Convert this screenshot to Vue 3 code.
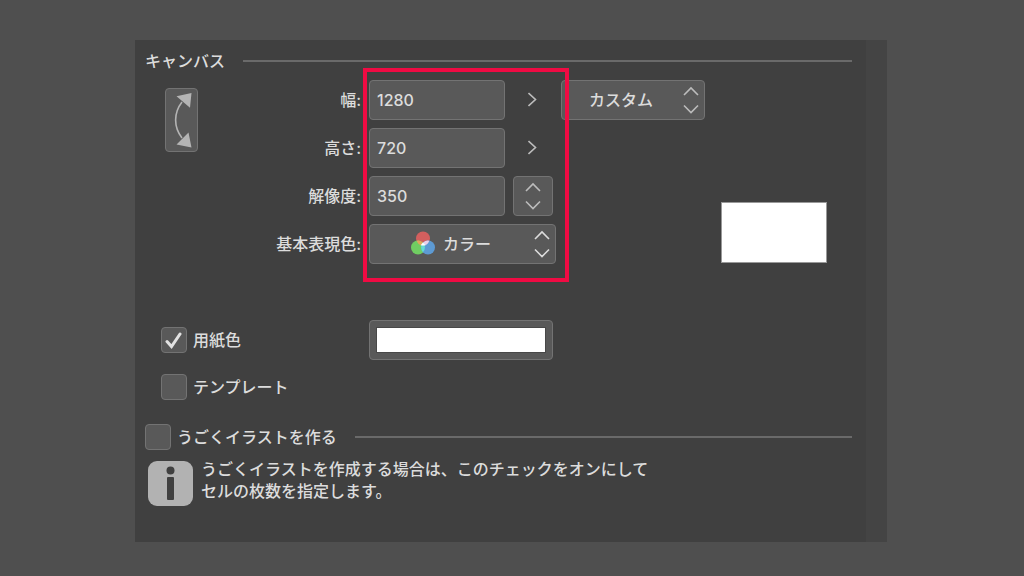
<script setup>
import { ref } from 'vue'

const rows = ref([
  { id: 'width', label: '幅:', value: '1280' },
  { id: 'height', label: '高さ:', value: '720' },
  { id: 'resolution', label: '解像度:', value: '350' },
])
const preset = ref('custom')
const colorMode = ref('color')
const paper = ref(true)
const template = ref(false)
const animation = ref(false)
</script>

<template>
  <main class="page">
    <form class="panel" @submit.prevent>
      <div class="content">
        <div class="heading">
          <h1 class="title">キャンバス</h1>
          <span class="rule"></span>
        </div>

        <section class="canvas">
          <button type="button" class="box swap" aria-label="幅と高さを入れ替え">
            <svg width="31" height="62" viewBox="0 0 31 62" aria-hidden="true">
              <path d="M16 13C7.500 24 7.500 38 16 49" fill="none" stroke="#b4b4b4" stroke-width="1.600" />
              <path d="M25.500 4L10.500 7.200L24 18.800ZM25.500 58.500L10.500 55.500L22.500 43.500Z" fill="#b4b4b4" />
            </svg>
          </button>

          <div class="fields">
            <template v-for="row in rows" :key="row.id">
              <label class="label" :for="row.id">{{ row.label }}</label>
              <div class="row">
                <input :id="row.id" v-model="row.value" class="box number" type="text" inputmode="numeric" />
                <button v-if="row.id === 'resolution'" type="button" class="box step" aria-label="解像度を選択">
                  <svg width="16" height="28" viewBox="0 0 16 28" class="arrows" aria-hidden="true">
                    <path d="M1 9L8 2L15 9M1 19.500L8 26.500L15 19.500" />
                  </svg>
                </button>
                <button v-else type="button" class="more" :aria-label="row.label + ' 詳細'">
                  <svg width="10" height="16" viewBox="0 0 10 16" class="arrows" aria-hidden="true">
                    <path d="M0.500 1L7.500 7.500L0.500 14" />
                  </svg>
                </button>
                <span v-if="row.id === 'width'" class="picker preset">
                  <select v-model="preset" class="box" aria-label="プリセット">
                    <option value="custom">カスタム</option>
                  </select>
                  <svg width="16" height="28" viewBox="0 0 16 28" class="arrows mark" aria-hidden="true">
                    <path d="M1 9L8 2L15 9M1 19.500L8 26.500L15 19.500" />
                  </svg>
                </span>
              </div>
            </template>

            <label class="label" for="mode">基本表現色:</label>
            <div class="row">
              <span class="picker mode">
                <select id="mode" v-model="colorMode" class="box">
                  <option value="color">カラー</option>
                </select>
                <svg width="26" height="24" viewBox="0 0 26 24" class="rgb" aria-hidden="true">
                  <circle cx="13" cy="7.500" r="7" fill="#d25f5e" />
                  <circle cx="8" cy="16.500" r="7" fill="#70cd62" />
                  <circle cx="18" cy="16.500" r="7" fill="#5d9ad3" />
                  <path d="M6.700 9.700A7 7 0 0 1 13 11.700L12.200 14.500A7 7 0 0 1 6.700 9.700Z" fill="#e3a45c" />
                  <path d="M19.300 9.700A7 7 0 0 0 13 11.700L13 14.500A7 7 0 0 0 19.300 9.700Z" fill="#ead0ea" />
                  <path d="M13 11.700A7 7 0 0 1 13 21.300A7 7 0 0 1 13 11.700Z" fill="#65dcd2" />
                  <path d="M13 11.600L15.500 14.200Q13 15 10.600 14.200Z" fill="#fff" />
                </svg>
                <svg width="16" height="28" viewBox="0 0 16 28" class="arrows mark bright" aria-hidden="true">
                  <path d="M1 9L8 2L15 9M1 19.500L8 26.500L15 19.500" />
                </svg>
              </span>
            </div>
            <span class="highlight"></span>
          </div>

          <div class="preview"></div>
        </section>

        <section class="options">
          <label class="check">
            <input v-model="paper" type="checkbox" class="box tick" />
            <svg v-if="paper" width="18" height="18" viewBox="0 0 18 18" class="tickmark" aria-hidden="true">
              <path d="M2 10.500L6.500 15.500L15 3" />
            </svg>
            <span>用紙色</span>
          </label>
          <button type="button" class="box swatch" aria-label="用紙色を選択"><span class="paint"></span></button>
          <label class="check">
            <input v-model="template" type="checkbox" class="box tick" />
            <span>テンプレート</span>
          </label>
        </section>

        <section>
          <div class="heading second">
            <label class="check">
              <input v-model="animation" type="checkbox" class="box tick" />
              <span>うごくイラストを作る</span>
            </label>
            <span class="rule"></span>
          </div>
          <div class="note">
            <svg width="45" height="45" viewBox="0 0 45 45" class="info" aria-hidden="true">
              <rect width="45" height="45" rx="9" fill="#b2b2b2" />
              <circle cx="22.500" cy="9.500" r="4" fill="#404040" />
              <rect x="19" y="16" width="7" height="23" rx="1" fill="#404040" />
            </svg>
            <p>うごくイラストを作成する場合は、このチェックをオンにして<br />セルの枚数を指定します。</p>
          </div>
        </section>
      </div>
      <div class="gutter"></div>
    </form>
  </main>
</template>

<style>
body {
  margin: 0;
  background: #4f4f4f;
}
</style>

<style scoped>
* {
  box-sizing: border-box;
}
.page {
  display: flex;
  min-height: 100vh;
  padding: 40px 137px 34px 135px;
  color: #dcdcdc;
  font: 500 16px/24px Inter, "Noto Sans CJK JP", sans-serif;
}
.panel {
  display: flex;
  flex: 1;
  background: #404040;
}
.content {
  flex: 1;
  padding: 9px 14px 32px 10px;
}
.gutter {
  width: 21px;
  background: #444;
}
.heading {
  display: flex;
  align-items: center;
  gap: 18px;
}
.title {
  margin: 0;
  font-size: 16px;
  font-weight: 500;
}
.rule {
  flex: 1;
  height: 2px;
  background: #6a6a6a;
}
.box {
  margin: 0;
  border: 1px solid #737373;
  border-radius: 4px;
  background: #595959;
  color: inherit;
  font: inherit;
  appearance: none;
}
.canvas {
  display: flex;
  align-items: flex-start;
  padding: 7px 25px 0 20px;
}
.swap {
  flex: none;
  width: 33px;
  height: 64px;
  margin-top: 8px;
  padding: 0;
}
.swap svg {
  display: block;
}
.fields {
  position: relative;
  display: grid;
  grid-template-columns: 163px auto;
  gap: 8px;
}
.label {
  line-height: 40px;
  text-align: right;
}
.row {
  display: flex;
  gap: 8px;
}
.number {
  width: 136px;
  height: 40px;
  padding: 0 7px;
}
.step,
.more {
  display: flex;
  align-items: center;
  justify-content: center;
  width: 40px;
  height: 40px;
  padding: 0;
}
.more {
  border: 0;
  background: none;
}
.arrows {
  fill: none;
  stroke: #bcbcbc;
  stroke-width: 1.6;
}
.bright {
  stroke: #dcdcdc;
}
.picker {
  position: relative;
  display: block;
}
.picker select {
  width: 100%;
  height: 40px;
}
.preset {
  width: 144px;
}
.preset select {
  padding: 0 27px;
}
.mode {
  width: 187px;
}
.mode select {
  padding: 0 28px 0 73px;
}
.mark {
  position: absolute;
  top: 6px;
  right: 6px;
  pointer-events: none;
}
.rgb {
  position: absolute;
  top: 7px;
  left: 41px;
  pointer-events: none;
}
.highlight {
  position: absolute;
  top: -12px;
  left: 165px;
  width: 206px;
  height: 214px;
  border: 4px solid #f00b43;
  pointer-events: none;
}
.preview {
  flex: none;
  width: 106px;
  height: 61px;
  margin: 122px 0 0 auto;
  border: 1px solid #999;
  background: #fff;
}
.options {
  display: grid;
  grid-template-columns: 208px 184px;
  row-gap: 14px;
  align-items: center;
  padding: 56px 0 0 16px;
}
.check {
  position: relative;
  display: flex;
  align-items: center;
  gap: 6px;
}
.tick {
  width: 26px;
  height: 26px;
}
.tickmark {
  position: absolute;
  left: 4px;
  fill: none;
  stroke: #e2e2e2;
  stroke-width: 3;
  stroke-linecap: round;
}
.swatch {
  height: 40px;
  padding: 6px;
}
.paint {
  display: block;
  height: 26px;
  border: 1px solid #484848;
  background: #fff;
}
.second {
  padding-top: 24px;
}
.note {
  display: flex;
  align-items: flex-start;
  gap: 8px;
  padding: 8px 0 0 3px;
}
.info {
  flex: none;
  margin-top: 3px;
}
.note p {
  margin: 0;
  line-height: 22px;
}
</style>
